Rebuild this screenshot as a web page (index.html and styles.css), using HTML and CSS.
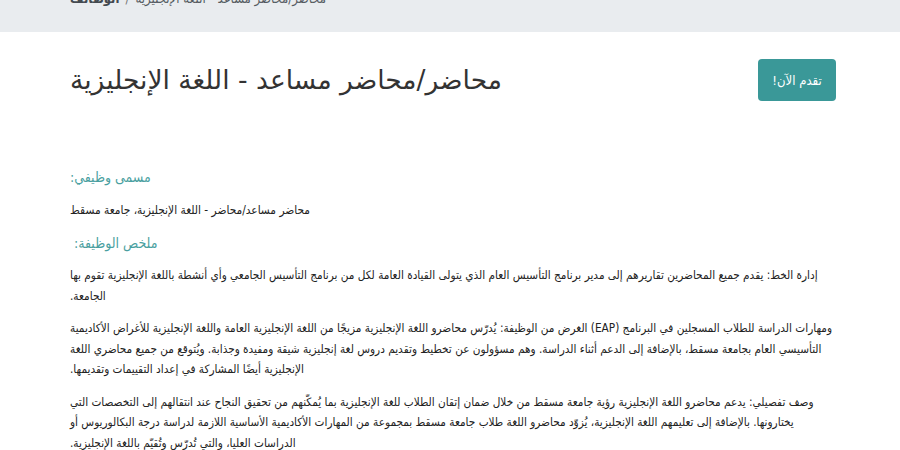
FILE: index.html
```html
<!DOCTYPE html>
<html lang="ar">
<head>
<meta charset="utf-8">
<title>محاضر/محاضر مساعد - اللغة الإنجليزية</title>
<link rel="stylesheet" href="styles.css">
</head>
<body>
<nav class="crumbs">
  <ol class="crumb-list">
    <li class="crumb crumb-home">الوظائف</li>
    <li class="crumb-sep">/</li>
    <li class="crumb">محاضر/محاضر مساعد - اللغة الإنجليزية</li>
  </ol>
</nav>
<main class="page">
  <header class="job-head">
    <h1 class="job-title">محاضر/محاضر مساعد - اللغة الإنجليزية</h1>
    <button class="apply-btn" dir="rtl">تقدم الآن!</button>
  </header>
  <section class="job-body">
    <h2 class="label">مسمى وظيفي:&rlm;</h2>
    <p class="value">محاضر مساعد/محاضر - اللغة الإنجليزية، جامعة مسقط</p>
    <h2 class="label label-indent">ملخص الوظيفة:&rlm;</h2>
    <p class="para">إدارة الخط: يقدم جميع المحاضرين تقاريرهم إلى مدير برنامج التأسيس العام الذي يتولى القيادة العامة لكل من برنامج التأسيس الجامعي وأي أنشطة باللغة الإنجليزية تقوم بها الجامعة.&rlm;</p>
    <p class="para">الغرض من الوظيفة: يُدرّس محاضرو اللغة الإنجليزية مزيجًا من اللغة الإنجليزية العامة واللغة الإنجليزية للأغراض الأكاديمية (EAP) ومهارات الدراسة للطلاب المسجلين في البرنامج التأسيسي العام بجامعة مسقط، بالإضافة إلى الدعم أثناء الدراسة. وهم مسؤولون عن تخطيط وتقديم دروس لغة إنجليزية شيقة ومفيدة وجذابة. ويُتوقع من جميع محاضري اللغة الإنجليزية أيضًا المشاركة في إعداد التقييمات وتقديمها.&rlm;</p>
    <p class="para">وصف تفصيلي: يدعم محاضرو اللغة الإنجليزية رؤية جامعة مسقط من خلال ضمان إتقان الطلاب للغة الإنجليزية بما يُمكّنهم من تحقيق النجاح عند انتقالهم إلى التخصصات التي يختارونها. بالإضافة إلى تعليمهم اللغة الإنجليزية، يُزوّد محاضرو اللغة طلاب جامعة مسقط بمجموعة من المهارات الأكاديمية الأساسية اللازمة لدراسة درجة البكالوريوس أو الدراسات العليا، والتي تُدرّس وتُقيّم باللغة الإنجليزية.&rlm;</p>
  </section>
</main>
</body>
</html>
```

FILE: styles.css
```css
html, body {
  margin: 0;
  padding: 0;
  background: #ffffff;
}

body {
  font-family: "DejaVu Sans Condensed", "DejaVu Sans", sans-serif;
  color: #222222;
}

.crumbs {
  background: #e9ecef;
  height: 32px;
  overflow: hidden;
  padding: 0 64px 0 70px;
}

.crumb-list {
  list-style: none;
  margin: -11px 0 0 0;
  padding: 0;
  display: flex;
  gap: 6px;
  font-size: 13px;
  line-height: 20px;
  color: #555b61;
}

.crumb-home {
  font-weight: bold;
  color: #444a50;
}

.crumb-sep {
  color: #777;
}

.page {
  padding: 0 64px 0 70px;
}

.job-head {
  display: flex;
  justify-content: space-between;
  align-items: center;
  margin-top: 27px;
}

.job-title {
  margin: 0;
  font-family: "DejaVu Sans", sans-serif;
  font-weight: normal;
  font-size: 26.5px;
  line-height: 40px;
  color: #333333;
}

.apply-btn {
  width: 78px;
  height: 42px;
  border: none;
  border-radius: 4px;
  background: #3a9898;
  color: #ffffff;
  font-family: "DejaVu Sans Condensed", "DejaVu Sans", sans-serif;
  font-size: 13px;
  padding: 0;
}

.job-body {
  margin-top: 66px;
}

.label {
  margin: 0;
  font-weight: normal;
  font-size: 14px;
  line-height: 20px;
  color: #4a9fa0;
}

.label-indent {
  padding-left: 4px;
}

.value {
  margin: 13px 0 13px 0;
  font-size: 11.8px;
  line-height: 20px;
}

.para {
  margin: 12px 0 12px 0;
  font-size: 11.7px;
  line-height: 20.5px;
}
```
